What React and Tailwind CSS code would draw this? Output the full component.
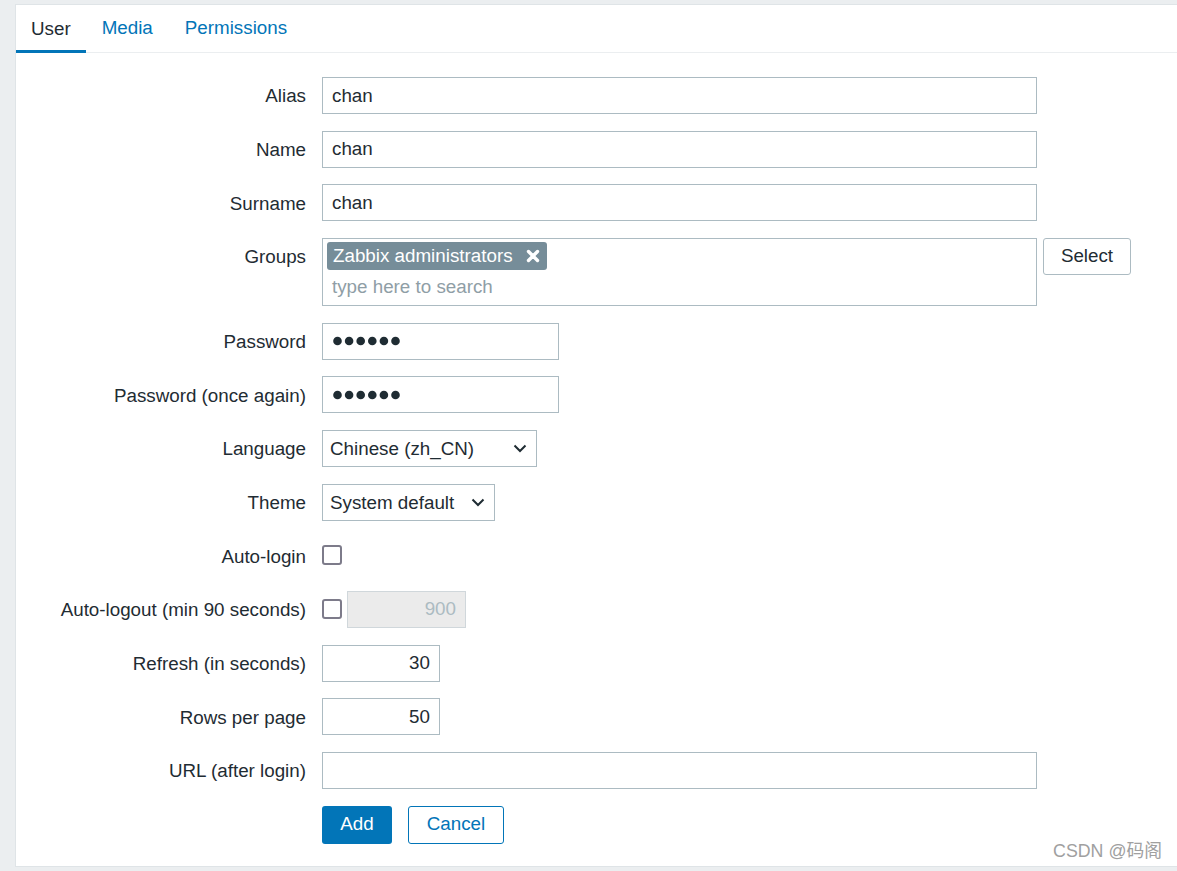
import React from 'react';

const font = "font-['Liberation_Sans','Arial',sans-serif]";

function Row({ label, children, top = false }) {
  return (
    <div className={`flex ${top ? 'items-start' : 'items-center'}`}>
      <div className="w-[290px] h-[37px] flex items-center justify-end pt-[2px] text-[18.8px] text-[#1f2c33]">{label}</div>
      <div className="ml-4 flex items-start">{children}</div>
    </div>
  );
}

function TextBox({ value = '', w, right = false, disabled = false }) {
  return (
    <input
      type="text"
      readOnly
      value={value}
      disabled={disabled}
      className={`h-[37px] border px-[9px] text-[18.8px] outline-none ${right ? 'text-right' : ''} ${disabled ? 'bg-[#ebebeb] border-[#d0d7db] text-[#acbbc2]' : 'bg-white border-[#acbbc2] text-[#1f2c33]'}`}
      style={{ width: w }}
    />
  );
}

function Secret({ w }) {
  return (
    <div className="h-[37px] border border-[#acbbc2] bg-white flex items-center pl-[10px]" style={{ width: w }}>
      <svg width="70" height="10" viewBox="0 0 70 10">
        {[0, 1, 2, 3, 4, 5].map(i => (
          <circle key={i} cx={4.5 + i * 11.6} cy="5" r="4.3" fill="#1f2c33" />
        ))}
      </svg>
    </div>
  );
}

function DropDown({ value, w }) {
  return (
    <div className="h-[37px] border border-[#acbbc2] bg-white flex items-center justify-between pl-[7px] pr-[9px] text-[18.8px] text-[#1f2c33]" style={{ width: w }}>
      <span className="pt-[1px]">{value}</span>
      <svg width="14" height="9" viewBox="0 0 14 9" fill="none">
        <path d="M1.5 1.5 L7 7 L12.5 1.5" stroke="#1f2c33" strokeWidth="2" />
      </svg>
    </div>
  );
}

function Check() {
  return <div className="w-[20px] h-[20px] border-2 border-[#7d7b8a] rounded-[3px] bg-white mt-[8px]" />;
}

export default function App() {
  return (
    <div className={`${font} min-h-[871px] bg-[#ebeef0] pt-[4px] pl-[15px] pb-[5px] relative overflow-hidden`}>
      <div className="bg-white border border-r-0 border-[#dfe4e7] h-[863px]">
        <div className="flex h-[48px] border-b border-[#ebeef0] text-[18.8px]">
          <div className="px-[15px] flex items-center text-[#1f2c33] border-b-[3px] border-[#0275b8] -mb-px pt-[3px]">User</div>
          <div className="px-[16px] flex items-center text-[#0275b8]">Media</div>
          <div className="px-[16px] flex items-center text-[#0275b8]">Permissions</div>
        </div>

        <div className="pt-[24px] flex flex-col gap-[16.67px]">
          <Row label="Alias"><TextBox value="chan" w={715} /></Row>
          <Row label="Name"><TextBox value="chan" w={715} /></Row>
          <Row label="Surname"><TextBox value="chan" w={715} /></Row>
          <Row label="Groups" top>
            <div className="w-[715px] h-[68px] border border-[#acbbc2] bg-white pl-[4px] pt-[3px]">
              <div className="inline-flex items-center h-[28px] bg-[#768d99] rounded-[3px] pl-[6px] pr-[7px] text-white text-[18.8px]">
                Zabbix administrators
                <svg className="ml-[13px]" width="14" height="14" viewBox="0 0 14 14">
                  <path d="M2.5 2.5 L11.5 11.5 M11.5 2.5 L2.5 11.5" stroke="#fff" strokeWidth="3.4" strokeLinecap="round" />
                </svg>
              </div>
              <div className="pl-[5px] pt-[3px] text-[18.8px] text-[#8f9ea6]">type here to search</div>
            </div>
            <button className="ml-[6px] w-[88px] h-[37px] border border-[#acbbc2] rounded-[3px] bg-white text-[18.8px] text-[#1f2c33]">Select</button>
          </Row>
          <Row label="Password"><Secret w={237} /></Row>
          <Row label="Password (once again)"><Secret w={237} /></Row>
          <Row label="Language"><DropDown value="Chinese (zh_CN)" w={215} /></Row>
          <Row label="Theme"><DropDown value="System default" w={173} /></Row>
          <Row label="Auto-login"><div className="h-[37px]"><Check /></div></Row>
          <Row label="Auto-logout (min 90 seconds)">
            <Check />
            <div className="ml-[5px]"><TextBox value="900" w={119} right disabled /></div>
          </Row>
          <Row label="Refresh (in seconds)"><TextBox value="30" w={118} right /></Row>
          <Row label="Rows per page"><TextBox value="50" w={118} right /></Row>
          <Row label="URL (after login)"><TextBox value="" w={715} /></Row>
          <div className="flex pl-[306px] gap-4">
            <button className="w-[70px] h-[38px] bg-[#0275b8] rounded-[3px] text-white text-[18.8px]">Add</button>
            <button className="w-[96px] h-[38px] border border-[#0275b8] rounded-[3px] bg-white text-[#0275b8] text-[18.8px]">Cancel</button>
          </div>
        </div>
      </div>
      <div className="absolute right-[15px] bottom-[7px] text-[17.8px] text-[#a0a0a0] font-['Liberation_Sans','Noto_Sans_CJK_SC',sans-serif]">CSDN @码阁</div>
    </div>
  );
}
